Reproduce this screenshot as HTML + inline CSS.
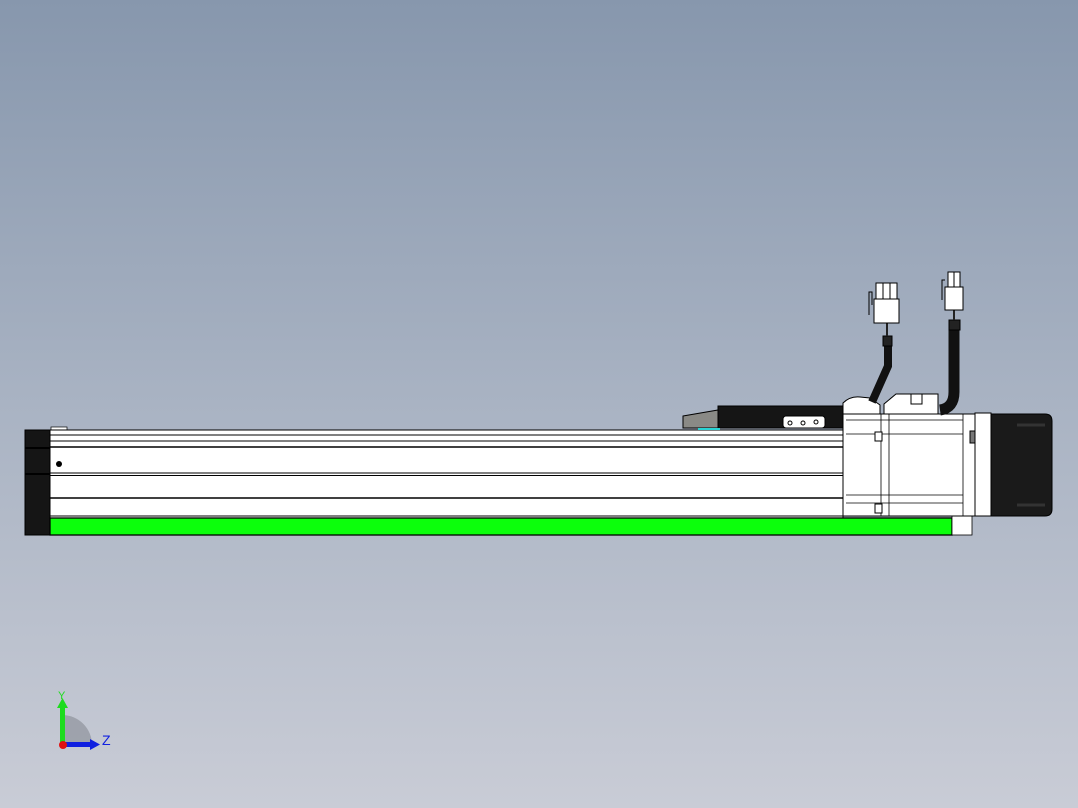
<!DOCTYPE html>
<html><head><meta charset="utf-8"><style>
html,body{margin:0;padding:0;width:1078px;height:808px;overflow:hidden}
body{background:linear-gradient(#8797ad,#a9b3c3 50%,#c9ccd6)}
svg{position:absolute;left:0;top:0}
</style></head><body>
<svg width="1078" height="808" viewBox="0 0 1078 808" font-family="Liberation Sans, sans-serif">
<rect x="25" y="430" width="25" height="105" fill="#151515" stroke="#000"/>
<line x1="25" y1="448" x2="50" y2="448" stroke="#000" stroke-width="2"/>
<line x1="25" y1="474" x2="50" y2="474" stroke="#000" stroke-width="2"/>
<rect x="51" y="427" width="16" height="3" fill="#fff" stroke="#000" stroke-width="0.7"/>
<rect x="50" y="430" width="793" height="88" fill="#fff" stroke="#000"/>
<g stroke="#000">
<line x1="50" y1="435" x2="843" y2="435"/>
<line x1="50" y1="441" x2="843" y2="441"/>
<line x1="50" y1="447" x2="843" y2="447" stroke-width="1.6"/>
<line x1="50" y1="473" x2="843" y2="473"/>
<line x1="50" y1="475.5" x2="843" y2="475.5"/>
<line x1="50" y1="498" x2="843" y2="498" stroke-width="1.6"/>
<line x1="50" y1="516" x2="843" y2="516"/>
</g>
<circle cx="59" cy="464" r="3" fill="#000"/>
<rect x="50" y="518" width="902" height="17" fill="#0cff0c" stroke="#000" stroke-width="1.3"/>
<rect x="952" y="515" width="20" height="20" fill="#fff" stroke="#000" stroke-width="0.8"/>
<path d="M683 416 L718 410 L718 428 L683 428 Z" fill="#8a8a86" stroke="#000"/>
<rect x="718" y="406" width="125" height="22" fill="#151515" stroke="#000"/>
<rect x="783" y="416" width="42" height="12" rx="3" fill="#fff" stroke="#000"/>
<circle cx="790" cy="423" r="2" fill="none" stroke="#000"/>
<circle cx="803" cy="423" r="2" fill="none" stroke="#000"/>
<circle cx="816" cy="422" r="2" fill="none" stroke="#000"/>
<rect x="698" y="428" width="22" height="2" fill="#2ad4d4"/>
<rect x="843" y="414" width="132" height="102" fill="#fff" stroke="#000"/>
<g stroke="#000" stroke-width="0.8">
<line x1="881" y1="414" x2="881" y2="516"/>
<line x1="889" y1="414" x2="889" y2="516"/>
<line x1="963" y1="414" x2="963" y2="516"/>
<line x1="846" y1="420" x2="963" y2="420"/>
<line x1="846" y1="434" x2="963" y2="434"/>
<line x1="846" y1="495" x2="963" y2="495"/>
<line x1="846" y1="503" x2="963" y2="503"/>
</g>
<rect x="875" y="432" width="7" height="9" fill="#fff" stroke="#000"/>
<rect x="875" y="504" width="7" height="9" fill="#fff" stroke="#000"/>
<rect x="970" y="431" width="5" height="12" fill="#777" stroke="#000"/>
<rect x="975" y="413" width="16" height="103" fill="#fff" stroke="#000"/>
<path d="M991 414 L1045 414 Q1052 414 1052 421 L1052 509 Q1052 516 1045 516 L991 516 Z" fill="#1a1a1a" stroke="#000"/>
<line x1="1017" y1="425" x2="1045" y2="425" stroke="#333" stroke-width="3"/>
<line x1="1017" y1="505" x2="1045" y2="505" stroke="#333" stroke-width="3"/>
<path d="M843 414 L843 403 Q850 396 860 397 L870 398 L880 405 L880 414 Z" fill="#fff" stroke="#000"/>
<path d="M884 414 L884 404 L896 394 L938 394 L938 414 Z" fill="#fff" stroke="#000"/>
<rect x="911" y="394" width="11" height="10" fill="#fff" stroke="#000"/>
<path d="M888 340 L888 366 L872 402" fill="none" stroke="#111" stroke-width="8"/>
<rect x="883" y="336" width="9" height="10" fill="#222" stroke="#000"/>
<line x1="887" y1="323" x2="887" y2="336" stroke="#222" stroke-width="2"/>
<path d="M954 328 L954 392 Q954 408 940 410" fill="none" stroke="#111" stroke-width="11"/>
<rect x="949" y="320" width="11" height="10" fill="#222" stroke="#000"/>
<line x1="954" y1="310" x2="954" y2="320" stroke="#222" stroke-width="2"/>
<rect x="874" y="299" width="25" height="24" fill="#fff" stroke="#000"/>
<rect x="876" y="283" width="21" height="16" fill="#fff" stroke="#000"/>
<line x1="883" y1="283" x2="883" y2="299" stroke="#000"/><line x1="890" y1="283" x2="890" y2="299" stroke="#000"/>
<path d="M869 315 L869 292 L872 292 L872 305" fill="none" stroke="#000"/>
<rect x="945" y="287" width="18" height="23" fill="#fff" stroke="#000"/>
<rect x="948" y="272" width="12" height="15" fill="#fff" stroke="#000"/>
<line x1="954" y1="272" x2="954" y2="287" stroke="#000"/>
<path d="M942 300 L942 280 L945 280" fill="none" stroke="#000"/>
<path d="M62 745 L62 715 A30 30 0 0 1 92 745 Z" fill="#8e939b" opacity="0.7"/>
<rect x="60" y="705" width="5" height="40" fill="#1ddc1d"/>
<path d="M57 708 L62.5 698 L68 708 Z" fill="#1ddc1d"/>
<rect x="62" y="742" width="30" height="5" fill="#1020e0"/>
<path d="M90 739 L100 744.5 L90 750 Z" fill="#1020e0"/>
<circle cx="63" cy="745" r="4" fill="#e01010"/>
<text x="58" y="699" font-size="11" fill="#1ddc1d">Y</text>
<text x="102" y="745" font-size="14" fill="#1020e0">Z</text>
</svg>
</body></html>
